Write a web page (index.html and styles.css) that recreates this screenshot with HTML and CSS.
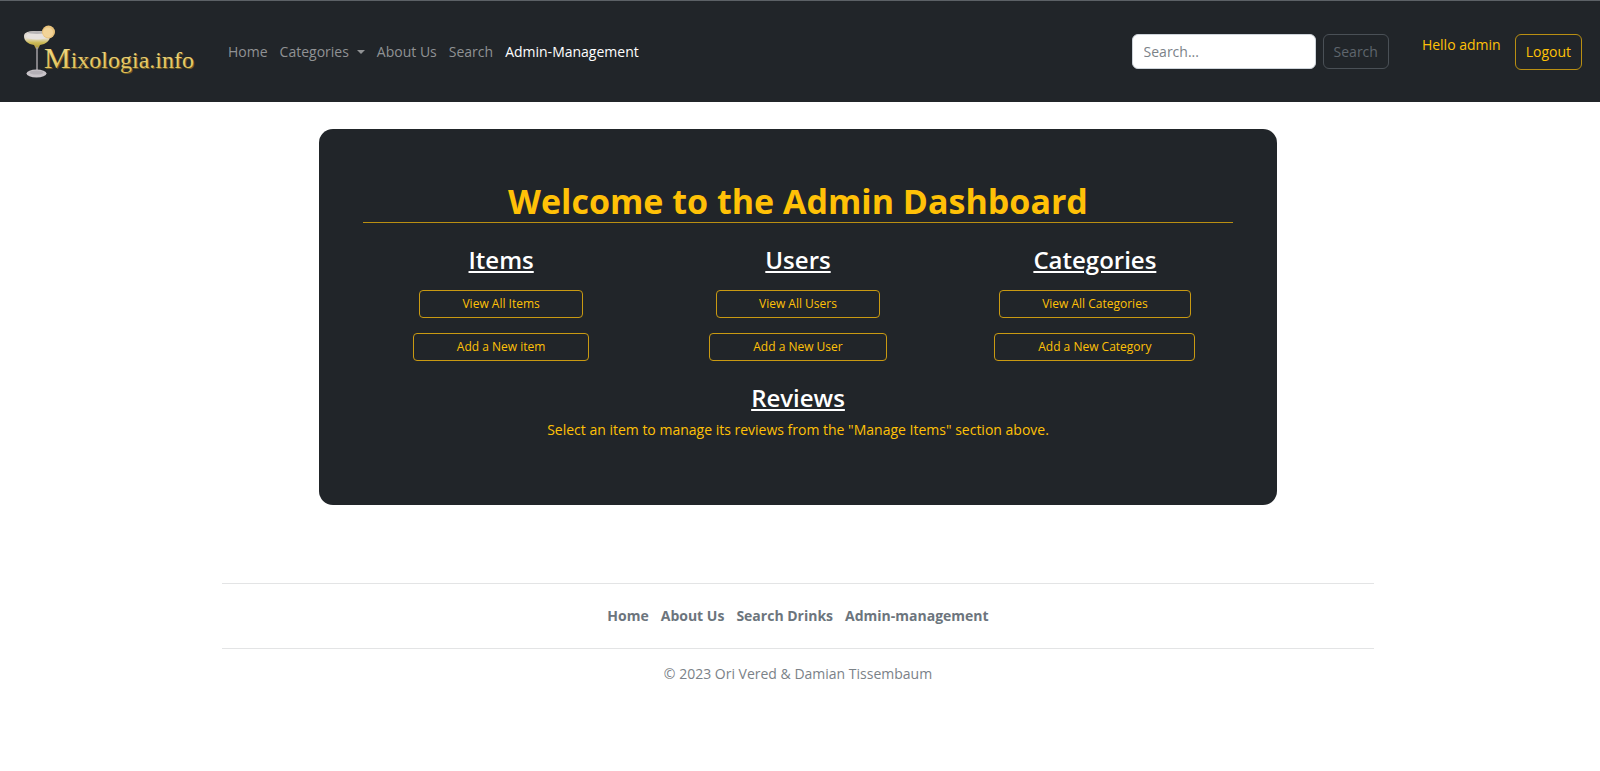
FILE: index.html
```html
<!DOCTYPE html>
<html lang="en">
<head>
<meta charset="utf-8">
<meta name="viewport" content="width=device-width, initial-scale=1">
<title>Mixologia.info - Admin Management</title>
<link rel="stylesheet" href="styles.css">
</head>
<body>
<header class="navbar">
  <a class="brand" href="#" aria-label="Mixologia.info">
    <svg class="brand-logo" width="180" height="62" viewBox="0 0 180 62">
      <defs>
        <linearGradient id="bowl" x1="0" y1="0" x2="0" y2="1">
          <stop offset="0" stop-color="#d9d4cf"/>
          <stop offset=".4" stop-color="#e4ded0"/>
          <stop offset=".65" stop-color="#cdbb55"/>
          <stop offset="1" stop-color="#a8923a"/>
        </linearGradient>
        <linearGradient id="gold" x1="0" y1="0" x2="0" y2="1">
          <stop offset="0" stop-color="#f3df8d"/>
          <stop offset="1" stop-color="#e0bd55"/>
        </linearGradient>
      </defs>
      <path d="M4 15C4 11 9 10 17 10S30 11 30 15C30 20 26 23 20 24L18 28H16L14 24C8 23 4 20 4 15Z" fill="url(#bowl)"/>
      <ellipse cx="17" cy="15" rx="11" ry="3.500" fill="#e6e2de"/>
      <ellipse cx="17" cy="11.500" rx="9" ry="1.500" fill="#b7b5b6"/>
      <circle cx="28.500" cy="11" r="6.500" fill="#e9c37c"/>
      <circle cx="28" cy="11.500" r="5" fill="#f2d498"/>
      <path d="M17 26V53" stroke="#a3a0a5" stroke-width="1.500"/>
      <ellipse cx="16.500" cy="52.500" rx="10" ry="4" fill="#c9c4c9"/>
      <ellipse cx="16.500" cy="51.500" rx="7" ry="2" fill="#b4b0b6"/>
      <text x="25" y="48" class="brand-shadow"><tspan class="brand-initial">M</tspan>ixologia.info</text>
      <text x="24" y="47" class="brand-text" fill="url(#gold)"><tspan class="brand-initial">M</tspan>ixologia.info</text>
    </svg>
  </a>
  <nav class="nav-links" aria-label="Main">
    <a href="#">Home</a>
    <a href="#" class="dropdown">Categories</a>
    <a href="#">About Us</a>
    <a href="#">Search</a>
    <a href="#" class="active">Admin-Management</a>
  </nav>
  <form class="search">
    <input class="search-input" type="search" placeholder="Search..." aria-label="Search">
    <button class="btn btn-search" type="button">Search</button>
  </form>
  <div class="account">
    <span class="greeting">Hello admin</span>
    <button class="btn btn-logout" type="button">Logout</button>
  </div>
</header>
<div class="page">
  <main class="card">
    <h1>Welcome to the Admin Dashboard</h1>
    <div class="columns">
      <section class="column">
        <h2>Items</h2>
        <a class="action" href="#">View All Items</a>
        <a class="action action-add" href="#">Add a New item</a>
      </section>
      <section class="column">
        <h2>Users</h2>
        <a class="action" href="#">View All Users</a>
        <a class="action action-add" href="#">Add a New User</a>
      </section>
      <section class="column">
        <h2>Categories</h2>
        <a class="action" href="#">View All Categories</a>
        <a class="action action-add" href="#">Add a New Category</a>
      </section>
    </div>
    <section class="reviews">
      <h2>Reviews</h2>
      <p>Select an item to manage its reviews from the "Manage Items" section above.</p>
    </section>
  </main>
  <footer class="footer">
    <nav class="footer-links" aria-label="Footer">
      <a href="#">Home</a>
      <a href="#">About Us</a>
      <a href="#">Search Drinks</a>
      <a href="#">Admin-management</a>
    </nav>
    <p>© 2023 Ori Vered &amp; Damian Tissembaum</p>
  </footer>
</div>
</body>
</html>
```
FILE: styles.css
```css
* { box-sizing: border-box; }
body {
  margin: 0;
  background: #fff;
  font: 14px/22px "Segoe UI", "Open Sans", "Noto Sans", sans-serif;
}
a { color: inherit; text-decoration: none; }
h1, h2, p { margin: 0; }

.navbar {
  display: flex;
  align-items: center;
  min-height: 102px;
  padding: 0 18px 0 20px;
  background: #212529;
  border-top: 1px solid #5c6166;
}
.brand { display: flex; margin-right: 28px; }
.brand-text, .brand-shadow { font: 24px "Liberation Serif", serif; }
.brand-shadow { fill: #6d5a22; }
.brand-initial { font-size: 30px; }
.nav-links { display: flex; gap: 12px; color: #909294; }
.nav-links .active { color: #fff; }
.dropdown::after {
  content: "";
  display: inline-block;
  margin-left: 8px;
  vertical-align: 3px;
  border: 4px solid transparent;
  border-top-color: currentColor;
  border-bottom: 0;
}
.search { display: flex; gap: 7px; margin-left: auto; }
.search-input {
  width: 184px;
  height: 35px;
  padding: 0 11px;
  border: 1px solid #ced4da;
  border-radius: 6px;
  background: #fff;
  font: inherit;
  color: #212529;
}
.search-input::placeholder { color: #7b8288; opacity: 1; }
.btn {
  padding: 0 10px;
  background: transparent;
  border: 1px solid;
  border-radius: 6px;
  font: inherit;
}
.btn-search { color: #5f666d; border-color: #4a5056; }
.account { display: flex; gap: 14px; margin-left: 33px; color: #ffc107; }
.btn-logout { height: 36px; color: #ffc107; border-color: #b98f12; }

.page { padding-right: 4px; }
.card {
  width: 60%;
  margin: 27px auto 78px;
  padding: 52px 44px 64px;
  background: #212529;
  border-radius: 14px;
  color: #ffc107;
  text-align: center;
}
h1 {
  border-bottom: 1px solid #b98f12;
  font-size: 34px;
  font-weight: 700;
  line-height: 41px;
}
h2 {
  color: #fff;
  font-size: 24px;
  font-weight: 600;
  line-height: 30px;
  text-decoration: underline;
  text-decoration-thickness: 2px;
  text-underline-offset: 2px;
}
.columns {
  display: grid;
  grid-template-columns: repeat(3, 1fr);
  gap: 21px;
  padding-top: 22px;
}
.column { display: flex; flex-direction: column; align-items: center; }
.action {
  min-width: 164px;
  margin-top: 15px;
  padding: 3px 42px;
  border: 1px solid #c99a12;
  border-radius: 4px;
  font-size: 12px;
  line-height: 20px;
}
.action-add { min-width: 176px; padding: 3px 43px; }
.reviews { padding-top: 22px; }
.reviews p { padding-top: 6px; }

.footer {
  width: 1152px;
  max-width: 100%;
  margin: 0 auto;
  color: #6c757d;
  text-align: center;
}
.footer-links {
  display: flex;
  justify-content: center;
  gap: 12px;
  padding: 21px 0;
  border: 1px solid #e3e4e5;
  border-width: 1px 0;
  font-weight: 700;
}
.footer p { padding-top: 14px; color: #7b8288; }
```
